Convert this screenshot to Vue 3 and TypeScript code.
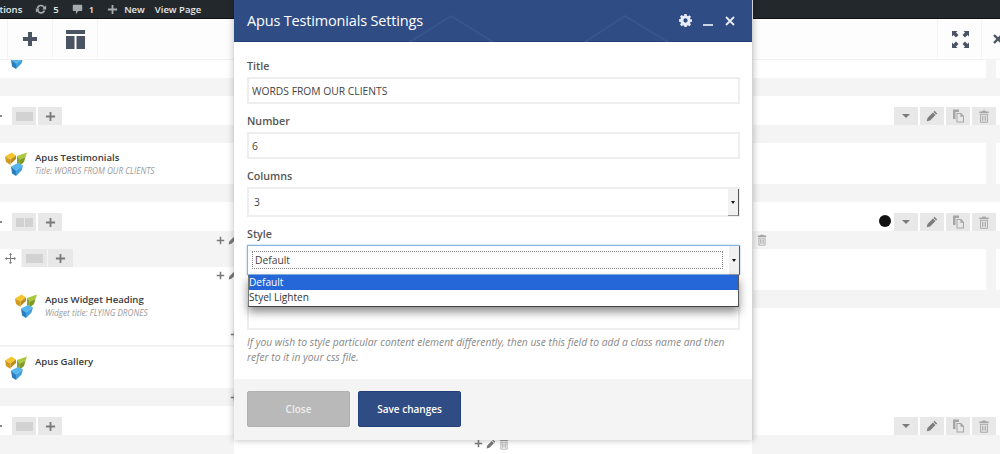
<template>
  <div class="page">
    <svg class="defs" width="0" height="0" aria-hidden="true">
      <defs>
        <symbol id="i-plus" viewBox="0 0 12 12"><path d="M5 1h2v4h4v2H7v4H5V7H1V5h4z" /></symbol>
        <symbol id="i-pencil" viewBox="0 0 12 12"><path d="M8.600 .8l2.600 2.600-1.100 1.100-2.600-2.600zM6.900 2.500l2.600 2.600-5.400 5.400-3.400 .8.800-3.400z" /></symbol>
        <symbol id="i-trash" viewBox="0 0 12 14">
          <path d="M4.400 .6h3.200l.5 1h2.900v1.800H1V1.600h2.900zM1.800 4.200h8.400v8.400a1 1 0 0 1-1 1H2.800a1 1 0 0 1-1-1zm1 1v7.400h6.400V5.200zM4 6.200h1.300v5.400H4zm2.700 0H8v5.400H6.700z" fill-rule="evenodd" />
        </symbol>
        <symbol id="i-copy" viewBox="0 0 13 14">
          <path d="M1 .6h6v2.400H3.500v7H1z" />
          <path d="M4.500 4h4.700l2.800 3v6.400H4.500zm1 1v7.400h5.500V7.800H8.400V5z" fill-rule="evenodd" />
        </symbol>
        <symbol id="i-logo" viewBox="0 0 22 24">
          <path d="M0 4.500L6.500 .5l4.500 3-5.500 4z" fill="#f6c52e" />
          <path d="M0 4.500l5.500 3V13L1 10z" fill="#d49a1c" />
          <path d="M5.500 7.500l5.500-4V7l-5.500 5z" fill="#b98a1c" />
          <path d="M12 4L22 .5 20.500 5 15 7.500z" fill="#a9c83c" />
          <path d="M12 4l3 3.500-.5 6.500L12 11.500z" fill="#86a32a" />
          <path d="M15 7.500L20.500 5 19 10l-4.500 4z" fill="#7d9a24" />
          <path d="M6 14.500l7-3.500 5 2.500-7 5z" fill="#55b7ee" />
          <path d="M6 14.500l5 4v5.500l-4-2.500z" fill="#2b7fbe" />
          <path d="M11 18.500l7-5-1.500 5L11 24z" fill="#3f9edc" />
        </symbol>
      </defs>
    </svg>

    <header class="adminbar">
      <span class="adminbar__cut">Options</span>
      <span class="adminbar__item">
        <svg class="wp-icon" viewBox="0 0 14 14"><path d="M7 2a5 5 0 0 1 4.300 2.500L13 3v4.500H8.500l1.500-1.700A3.300 3.300 0 0 0 3.800 6.200L2 5.700A5 5 0 0 1 7 2zM1 6.500h4.500L4 8.200a3.300 3.300 0 0 0 6.200.4l1.800.500A5 5 0 0 1 2.700 9.500L1 11z" /></svg>5
      </span>
      <span class="adminbar__item">
        <svg class="wp-icon wp-icon--small" viewBox="0 0 14 14"><path d="M2 1h10a1 1 0 0 1 1 1v6a1 1 0 0 1-1 1H8l-3 4V9H2a1 1 0 0 1-1-1V2a1 1 0 0 1 1-1z" /></svg>1
      </span>
      <span class="adminbar__item">
        <svg class="wp-icon wp-icon--small" viewBox="0 0 12 12"><use href="#i-plus" /></svg>New
      </span>
      <span class="adminbar__item adminbar__item--view">View Page</span>
    </header>

    <div class="toolbar">
      <div class="toolbar__cell toolbar__cell--stub" />
      <div class="toolbar__cell">
        <svg class="tool-plus" viewBox="0 0 14 14"><path d="M5 0h4v5h5v4H9v5H5V9H0V5h5z" /></svg>
      </div>
      <div class="toolbar__cell">
        <svg class="tool-layout" viewBox="0 0 19 19"><path d="M0 0h19v4H0zM0 6h8.500v13H0zM10.500 6H19v13h-8.500z" /></svg>
      </div>
      <div class="toolbar__space" />
      <div class="toolbar__cell toolbar__cell--end">
        <svg class="tool-expand" viewBox="0 0 17 17">
          <path d="M0 0h5.500L4 1.500 6.500 4 4 6.500 1.500 4 0 5.500zM17 0v5.500L15.500 4 13 6.500 10.500 4 13 1.500 11.500 0zM0 17v-5.500L1.500 13 4 10.500 6.500 13 4 15.500 5.500 17zM17 17h-5.500l1.500-1.500-2.500-2.500 2.500-2.500 2.500 2.500 1.500-1.500z" />
        </svg>
      </div>
      <div class="toolbar__cell toolbar__cell--close">
        <svg class="tool-close" viewBox="0 0 10 10"><path d="M1 1l8 8M9 1L1 9" /></svg>
      </div>
    </div>

    <main class="canvas">
      <section class="side side--left">
        <div class="element element--cut">
          <svg class="logo logo--cut"><use href="#i-logo" /></svg>
        </div>
        <div class="band" />
        <div class="controls">
          <span class="dot-cut" />
          <span class="ctl"><span class="layout-one" /></span>
          <span class="ctl"><svg class="ctl-plus"><use href="#i-plus" /></svg></span>
        </div>
        <div class="band" />
        <div class="element">
          <svg class="logo"><use href="#i-logo" /></svg>
          <div class="element__text">
            <div class="element__name">Apus Testimonials</div>
            <div class="element__sub">Title: WORDS FROM OUR CLIENTS</div>
          </div>
        </div>
        <div class="band" />
        <div class="controls">
          <span class="dot-cut" />
          <span class="ctl"><span class="layout-two" /></span>
          <span class="ctl"><svg class="ctl-plus"><use href="#i-plus" /></svg></span>
        </div>
        <div class="band band--actions">
          <svg class="act act--plus"><use href="#i-plus" /></svg>
          <svg class="act act--pencil"><use href="#i-pencil" /></svg>
        </div>
        <div class="inner-controls">
          <span class="move">
            <svg class="move__icon" viewBox="0 0 12 12">
              <path d="M6 0l2 2H6.500v3.500H10V4l2 2-2 2V6.500H6.500V10H8l-2 2-2-2h1.500V6.500H2V8L0 6l2-2v1.500h3.500V2H4z" />
            </svg>
          </span>
          <span class="ctl ctl--inner"><span class="layout-one" /></span>
          <span class="ctl ctl--inner"><svg class="ctl-plus"><use href="#i-plus" /></svg></span>
        </div>
        <div class="inner-element">
          <div class="inner-element__actions">
            <svg class="act act--plus"><use href="#i-plus" /></svg>
            <svg class="act act--pencil"><use href="#i-pencil" /></svg>
          </div>
          <div class="inner-element__body">
            <svg class="logo"><use href="#i-logo" /></svg>
            <div class="element__text">
              <div class="element__name">Apus Widget Heading</div>
              <div class="element__sub">Widget title: FLYING DRONES</div>
            </div>
          </div>
          <div class="inner-element__actions inner-element__actions--cut">
            <svg class="act act--plus"><use href="#i-plus" /></svg>
          </div>
        </div>
        <div class="divider" />
        <div class="element">
          <svg class="logo"><use href="#i-logo" /></svg>
          <div class="element__text">
            <div class="element__name">Apus Gallery</div>
          </div>
        </div>
        <div class="band band--actions band--cut">
          <svg class="act act--plus"><use href="#i-plus" /></svg>
        </div>
        <div class="controls">
          <span class="dot-cut" />
          <span class="ctl"><span class="layout-one" /></span>
          <span class="ctl"><svg class="ctl-plus"><use href="#i-plus" /></svg></span>
        </div>
        <div class="band band--last" />
      </section>

      <section class="side side--middle">
        <div class="middle-actions">
          <svg class="act act--plus"><use href="#i-plus" /></svg>
          <svg class="act act--pencil"><use href="#i-pencil" /></svg>
          <svg class="act act--trash"><use href="#i-trash" /></svg>
        </div>
      </section>

      <section class="side side--right">
        <div class="strip strip--top" />
        <div class="band" />
        <div class="controls controls--right">
          <span v-for="a in rowActions" :key="a" class="ctl" :class="`ctl--${a}`">
            <span v-if="a === 'caret'" class="caret" />
            <svg v-else class="ctl-icon"><use :href="`#i-${a}`" /></svg>
          </span>
        </div>
        <div class="band" />
        <div class="strip strip--element" />
        <div class="band" />
        <div class="controls controls--right">
          <span class="black-dot" />
          <span v-for="a in rowActions" :key="a" class="ctl" :class="`ctl--${a}`">
            <span v-if="a === 'caret'" class="caret" />
            <svg v-else class="ctl-icon"><use :href="`#i-${a}`" /></svg>
          </span>
        </div>
        <div class="band band--trash">
          <svg class="act act--trash"><use href="#i-trash" /></svg>
        </div>
        <div class="strip strip--element" />
        <div class="band" />
        <div class="controls controls--right controls--tall">
          <span v-for="a in rowActions" :key="a" class="ctl" :class="`ctl--${a}`">
            <span v-if="a === 'caret'" class="caret" />
            <svg v-else class="ctl-icon"><use :href="`#i-${a}`" /></svg>
          </span>
        </div>
        <div class="band band--last" />
      </section>
    </main>

    <div class="modal">
      <div class="modal__head">
        <svg class="modal__deco" viewBox="0 0 518 42" aria-hidden="true">
          <path d="M176 42l41-26 42 26M351 42l40-26 43 26" fill="none" stroke="#3a568e" stroke-width="1.500" />
        </svg>
        <span class="modal__title">Apus Testimonials Settings</span>
        <div class="modal__tools">
          <svg class="modal__gear" viewBox="0 0 14 14">
            <path fill-rule="evenodd" d="M5.800 0h2.400l.3 1.800 1.200.5 1.500-1 1.700 1.700-1 1.500.5 1.200 1.800.3v2.400l-1.800.3-.5 1.200 1 1.500-1.700 1.700-1.500-1-1.200.5-.3 1.800H5.800l-.3-1.800-1.200-.5-1.500 1-1.700-1.700 1-1.500-.5-1.200L-.2 8.200V5.800l1.800-.3.5-1.200-1-1.500 1.700-1.700 1.500 1 1.200-.5zM7 4.700a2.300 2.300 0 1 0 0 4.600 2.300 2.300 0 0 0 0-4.600z" />
          </svg>
          <span class="modal__min" />
          <svg class="modal__close" viewBox="0 0 10 10"><path d="M1 1l8 8M9 1L1 9" /></svg>
        </div>
      </div>

      <div class="modal__body">
        <label class="field-label">Title</label>
        <input class="field-input" value="WORDS FROM OUR CLIENTS" readonly />

        <label class="field-label">Number</label>
        <input class="field-input" value="6" readonly />

        <label class="field-label">Columns</label>
        <div class="select">
          <span class="select__value">3</span>
          <span class="select__arrow"><span class="select__caret" /></span>
        </div>

        <label class="field-label">Style</label>
        <div class="select select--open">
          <span class="select__focus">Default</span>
          <span class="select__arrow"><span class="select__caret" /></span>
          <ul class="dropdown">
            <li
              v-for="(opt, i) in styleOptions"
              :key="opt"
              class="dropdown__item"
              :class="{ active: i === 0 }"
            >
              {{ opt }}
            </li>
          </ul>
        </div>

        <input class="field-input field-input--extra" readonly />
        <p class="help">
          If you wish to style particular content element differently, then use this field to add a class name and then
          refer to it in your css file.
        </p>
      </div>

      <div class="modal__foot">
        <button class="btn btn--close" type="button">Close</button>
        <button class="btn btn--save" type="button">Save changes</button>
      </div>
    </div>
  </div>
</template>

<script setup lang="ts">
const rowActions: string[] = ['caret', 'pencil', 'copy', 'trash']
const styleOptions: string[] = ['Default', 'Styel Lighten']
</script>

<style>
html,
body {
  margin: 0;
  background: #fff;
}
</style>

<style scoped>
.page {
  position: relative;
  width: 1000px;
  height: 454px;
  overflow: hidden;
  background: #fff;
  font-family: "Open Sans", "Noto Sans", sans-serif;
  color: #444;
}

.defs {
  position: absolute;
}

.adminbar {
  display: flex;
  align-items: center;
  gap: 13px;
  height: 19px;
  background: #23282d;
  border-bottom: 1px solid #111;
  box-sizing: border-box;
  color: #e6e8ea;
  font-size: 9.500px;
  font-weight: 600;
  overflow: hidden;
}

.adminbar__cut {
  margin-left: -14px;
}

.adminbar__item {
  display: inline-flex;
  align-items: center;
  gap: 6px;
}

.adminbar__item--view {
  margin-left: -3px;
}

.wp-icon {
  width: 12px;
  height: 12px;
  fill: #a6abb0;
}

.wp-icon--small {
  width: 11px;
  height: 11px;
}

.toolbar {
  display: flex;
  height: 41px;
  background: #fdfdfd;
  border-bottom: 1px solid #f2f2f2;
  box-sizing: border-box;
}

.toolbar__cell {
  display: flex;
  align-items: center;
  justify-content: center;
  width: 44px;
  border-right: 1px solid #f3f3f3;
}

.toolbar__cell--stub {
  width: 7px;
}

.toolbar__space {
  flex: 1;
}

.toolbar__cell--end {
  width: 45px;
  padding-left: 2px;
  box-sizing: border-box;
  border-left: 1px solid #f3f3f3;
}

.toolbar__cell--close {
  width: 18px;
  border-right: 0;
  justify-content: flex-start;
  overflow: hidden;
}

.tool-close {
  width: 10px;
  height: 10px;
  margin-left: 11px;
  flex: none;
  fill: none;
  stroke: #4a5462;
  stroke-width: 2.400;
}

.tool-plus {
  width: 14px;
  height: 14px;
  fill: #4a5462;
}

.tool-layout {
  width: 19px;
  height: 19px;
  fill: #4a5462;
}

.tool-expand {
  width: 17px;
  height: 17px;
  fill: #4a5462;
}

.canvas {
  display: flex;
  height: 394px;
}

.side {
  display: flex;
  flex-direction: column;
}

.side--left {
  width: 234px;
  flex: none;
}

.side--middle {
  flex: 1;
  justify-content: flex-end;
  padding-right: 3px;
}

.side--right {
  width: 248px;
  flex: none;
}

.band {
  height: 18px;
  background: #f4f4f4;
  flex: none;
}

.band--last {
  height: 19px;
}

.band--actions {
  display: flex;
  align-items: center;
  justify-content: flex-end;
  gap: 3px;
  overflow: hidden;
}

.band--actions .act--pencil,
.inner-element__actions .act--pencil {
  margin-right: -4px;
}

.band--cut .act--plus,
.inner-element__actions--cut .act--plus {
  margin-right: -5px;
}

.band--trash {
  display: flex;
  align-items: center;
  padding-left: 5px;
}

.controls {
  display: flex;
  align-items: flex-end;
  gap: 2px;
  height: 29px;
  padding-left: 12px;
  position: relative;
  flex: none;
}

.controls--right {
  justify-content: flex-end;
  padding: 0 4px 0 0;
}

.controls--tall {
  height: 127px;
}

.dot-cut {
  position: absolute;
  left: 0;
  bottom: 8px;
  width: 2px;
  height: 2px;
  background: #888;
}

.ctl {
  display: flex;
  align-items: center;
  justify-content: center;
  width: 24px;
  height: 18px;
  background: #e8e8e8;
}

.ctl--inner {
  width: 25px;
}

.ctl-plus {
  width: 11px;
  height: 11px;
  fill: #7a7a7a;
}

.ctl-icon {
  width: 12px;
  height: 12px;
  fill: #7d7d7d;
}

.ctl--copy .ctl-icon {
  width: 13px;
  height: 14px;
  fill: #a6a6a6;
}

.ctl--trash .ctl-icon {
  width: 12px;
  height: 13px;
  fill: #a6a6a6;
}

.caret {
  width: 0;
  height: 0;
  border-left: 4px solid transparent;
  border-right: 4px solid transparent;
  border-top: 4px solid #7a7a7a;
}

.layout-one {
  display: block;
  width: 17px;
  height: 9px;
  background: #d2d2d2;
}

.layout-two {
  display: block;
  width: 17px;
  height: 9px;
  background: linear-gradient(to right, #d2d2d2 0 8px, transparent 8px 9px, #d2d2d2 9px 17px);
}

.black-dot {
  width: 12px;
  height: 12px;
  margin: 0 1px 4px 0;
  border-radius: 50%;
  background: #111;
}

.strip {
  flex: none;
  margin-right: 4px;
  background: #fff;
  border-right: 10px solid #f4f4f4;
}

.strip--top {
  height: 18px;
}

.strip--element {
  height: 41px;
}

.element {
  display: flex;
  align-items: flex-start;
  gap: 8px;
  height: 41px;
  padding: 5px 0 0 5px;
  box-sizing: border-box;
  background: #fff;
  flex: none;
}

.element--cut {
  height: 18px;
  padding: 0 0 0 5px;
  overflow: hidden;
}

.logo {
  width: 22px;
  height: 24px;
  margin-top: 4px;
  flex: none;
}

.logo--cut {
  margin-top: -15px;
}

.element__text {
  display: flex;
  flex-direction: column;
  padding-top: 3px;
}

.element__name {
  font-size: 9.600px;
  line-height: 13px;
  font-weight: 600;
  color: #3a3a3a;
  white-space: nowrap;
}

.element__sub {
  font-size: 8.200px;
  line-height: 13px;
  font-style: italic;
  color: #9a9a9a;
  white-space: nowrap;
}

.act {
  flex: none;
  width: 9px;
  height: 9px;
  fill: #7a7a7a;
}

.act--pencil {
  width: 10px;
  height: 10px;
}

.act--trash {
  width: 10px;
  height: 12px;
  fill: #a0a0a0;
}

.inner-controls {
  display: flex;
  gap: 1px;
  height: 18px;
  background: #f4f4f4;
  flex: none;
}

.move {
  display: flex;
  align-items: center;
  justify-content: center;
  width: 21px;
  background: #fff;
}

.move__icon {
  width: 11px;
  height: 11px;
  fill: #7a7a7a;
}

.inner-element {
  display: flex;
  flex-direction: column;
  height: 78px;
  background: #fff;
  flex: none;
}

.inner-element__actions {
  display: flex;
  justify-content: flex-end;
  align-items: center;
  gap: 3px;
  height: 16px;
  overflow: hidden;
  flex: none;
}

.inner-element__actions--cut {
  margin-top: auto;
  height: 22px;
}

.inner-element__body {
  display: flex;
  gap: 8px;
  padding: 7px 0 0 15px;
}

.divider {
  height: 2px;
  background: #f2f2f2;
  flex: none;
}

.middle-actions {
  display: flex;
  align-items: center;
  justify-content: center;
  gap: 3px;
  height: 21px;
}

.modal {
  position: absolute;
  left: 234px;
  top: 0;
  width: 518px;
  height: 440px;
  display: flex;
  flex-direction: column;
  background: #fff;
  border-right: 1px solid #d4d4d4;
  box-shadow: 0 0 7px rgba(0, 0, 0, 0.28);
}

.modal__head {
  position: relative;
  display: flex;
  align-items: center;
  justify-content: space-between;
  height: 42px;
  padding: 0 17px 0 13px;
  box-sizing: border-box;
  background: #304c84;
  border-bottom: 1px solid #23407a;
  color: #fff;
  flex: none;
}

.modal__deco {
  position: absolute;
  inset: 0;
  width: 518px;
  height: 42px;
}

.modal__title {
  position: relative;
  font-size: 14.500px;
  letter-spacing: -0.17px;
}

.modal__tools {
  position: relative;
  display: flex;
  align-items: center;
}

.modal__gear {
  width: 13px;
  height: 13px;
  fill: #e8edf5;
}

.modal__min {
  width: 10px;
  height: 2px;
  margin: 9px 12px 0 11px;
  background: #c9d3e4;
}

.modal__close {
  width: 10px;
  height: 10px;
  fill: none;
  stroke: #e8edf5;
  stroke-width: 1.800;
}

.modal__body {
  position: relative;
  flex: 1;
  padding: 16px 13px 0;
}

.field-label {
  display: block;
  height: 16px;
  margin: 9px 0 3px;
  font-size: 10.700px;
  line-height: 16px;
  font-weight: 600;
  color: #555;
}

.field-label:first-child {
  margin-top: 0;
}

.field-input {
  display: block;
  width: 493px;
  height: 27px;
  padding: 0 3px;
  box-sizing: border-box;
  border: 2px solid #eee;
  outline: none;
  font: 400 10.300px "Open Sans", sans-serif;
  color: #444;
  background: #fff;
}

.field-input--extra {
  margin-top: 28px;
}

.select {
  position: relative;
  display: flex;
  align-items: center;
  width: 493px;
  height: 30px;
  box-sizing: border-box;
  border: 2px solid #eee;
  font-size: 10.300px;
  color: #444;
}

.select__value {
  margin-left: 5px;
}

.select__arrow {
  position: absolute;
  top: 0;
  right: -1px;
  bottom: -1px;
  display: flex;
  align-items: center;
  justify-content: center;
  width: 11px;
  background: #f1f1f1;
  border-right: 1px solid #555;
  border-bottom: 1px solid #999;
  box-sizing: border-box;
}

.select__caret {
  width: 0;
  height: 0;
  border-left: 2.500px solid transparent;
  border-right: 2.500px solid transparent;
  border-top: 3px solid #111;
}

.select--open {
  border: 1px solid #86b5e4;
  box-shadow: 0 0 2px #9cc8ee;
}

.select__focus {
  display: flex;
  align-items: center;
  margin-left: 4px;
  width: 471px;
  height: 18px;
  padding-left: 2px;
  box-sizing: border-box;
  border: 1px dotted #888;
}

.dropdown {
  position: absolute;
  top: 29px;
  left: 0;
  width: 491px;
  margin: 0;
  padding: 0 0 1px;
  list-style: none;
  background: #fff;
  border-bottom: 1px solid #444;
  border-left: 1px solid #777;
  border-right: 1px solid #555;
  box-sizing: border-box;
  box-shadow: 0 5px 10px rgba(0, 0, 0, 0.45);
  z-index: 2;
}

.dropdown__item {
  height: 15px;
  font-size: 10.100px;
  line-height: 15px;
  color: #333;
}

.dropdown__item.active {
  background: #2566d8;
  color: #fff;
}

.help {
  margin: 5px 0 0;
  font-size: 10.300px;
  line-height: 15px;
  font-style: italic;
  color: #888;
}

.modal__foot {
  display: flex;
  gap: 8px;
  height: 61px;
  padding: 12px 13px 0;
  box-sizing: border-box;
  background: #f4f4f4;
  flex: none;
}

.btn {
  width: 103px;
  height: 36px;
  border-radius: 2px;
  font: 600 10px "Open Sans", sans-serif;
  cursor: pointer;
}

.btn--close {
  background: #b9b9b9;
  border: 1px solid #b0b0b0;
  color: #eee;
}

.btn--save {
  background: #304c84;
  border: 1px solid #23407a;
  color: #fff;
}
</style>
